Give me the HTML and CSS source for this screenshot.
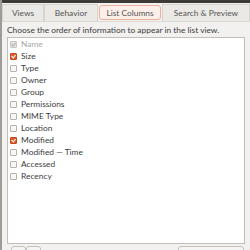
FILE: index.html
```html
<!DOCTYPE html>
<html lang="en">
  <head>
    <meta charset="UTF-8" />
    <title>Preferences - List Columns</title>
    <link rel="stylesheet" href="styles.css">
  </head>
  <body>
    <div class="titlebar"></div>

    <div class="dialog">
      <!-- Notebook tabs -->
      <div class="tabs">
        <div class="tab tab-views">Views</div>
        <div class="tab tab-behavior">Behavior</div>
        <div class="tab tab-active">List Columns</div>
        <div class="tab tab-search">Search &amp; Preview</div>
      </div>

      <p class="hint">Choose the order of information to appear in the list view.</p>

      <!-- Column list -->
      <ul class="columns">
        <li class="disabled"><span class="check checked"></span>Name</li>
        <li><span class="check checked"></span>Size</li>
        <li><span class="check"></span>Type</li>
        <li><span class="check"></span>Owner</li>
        <li><span class="check"></span>Group</li>
        <li><span class="check"></span>Permissions</li>
        <li><span class="check"></span>MIME Type</li>
        <li><span class="check"></span>Location</li>
        <li><span class="check checked"></span>Modified</li>
        <li><span class="check"></span>Modified — Time</li>
        <li><span class="check"></span>Accessed</li>
        <li><span class="check"></span>Recency</li>
      </ul>

      <!-- Buttons below the list, mostly cut off -->
      <div class="buttons">
        <div class="btn-pair">
          <span class="btn"></span>
          <span class="btn"></span>
        </div>
        <span class="btn btn-wide"></span>
      </div>
    </div>
  </body>
</html>
```

FILE: styles.css
```css
/* Ambiance-like dialog */
html,
body {
  margin: 0;
  padding: 0;
  height: 250px;
  overflow: hidden;
}

body {
  font-family: Lato, "Open Sans", sans-serif;
  font-size: 8.4px;
  color: #3c3c3c;
  background-color: #f2f1f0;
  border-left: 2px solid #9e9c98;
  box-sizing: border-box;
}

.titlebar {
  height: 3px;
  background-color: #3c3b37;
}

.dialog {
  display: flex;
  flex-direction: column;
}

.tabs {
  display: flex;
  height: 17px;
  margin-top: 1px;
  border-bottom: 1px solid #dcdad5;
}

.tab {
  display: flex;
  align-items: center;
  justify-content: center;
  background-color: #ebe9e6;
  border: 1px solid #d6d4cf;
  border-bottom: none;
  color: #555;
  box-sizing: border-box;
}

.tab-views {
  width: 42px;
}

.tab-behavior {
  width: 54px;
}

.tab-active {
  width: 62px;
  margin: 1px 1px 0;
  height: 15px;
  background-color: #fcefe9;
  border: 1px solid #eab09c;
  border-radius: 3px;
}

.tab-search {
  flex: 1;
}

.hint {
  margin: 2px 0 0 5px;
  height: 12px;
  line-height: 12px;
}

.columns {
  list-style: none;
  margin: 1px 5px 0 5px;
  padding: 0 0 0 2px;
  height: 207px;
  background-color: #fff;
  border: 1px solid #c2bfbb;
  box-sizing: border-box;
}

.columns li {
  display: flex;
  align-items: center;
  height: 12px;
  gap: 4px;
}

.columns li.disabled {
  color: #a8a8a8;
}

.check {
  width: 7px;
  height: 7px;
  border: 1px solid #b6b3ae;
  border-radius: 1px;
  background-color: #f7f7f6;
  box-sizing: border-box;
  position: relative;
}

.check.checked {
  background-color: #df5b2c;
  border-color: #c9481b;
}

.check.checked::after {
  content: "";
  position: absolute;
  left: 1px;
  top: 0;
  width: 2px;
  height: 3px;
  border: solid #fff;
  border-width: 0 1px 1px 0;
  transform: rotate(40deg);
}

.disabled .check.checked {
  background-color: #e4e3e1;
  border-color: #c8c6c2;
}

.disabled .check.checked::after {
  border-color: #b0aeaa;
}

.buttons {
  display: flex;
  justify-content: space-between;
  margin: 2px 6px 0 9px;
}

.btn-pair {
  display: flex;
}

.btn {
  width: 15px;
  height: 10px;
  border: 1px solid #c5c2bd;
  border-radius: 3px;
  background-color: #f5f4f3;
  box-sizing: border-box;
}

.btn-wide {
  width: 66px;
}
```
